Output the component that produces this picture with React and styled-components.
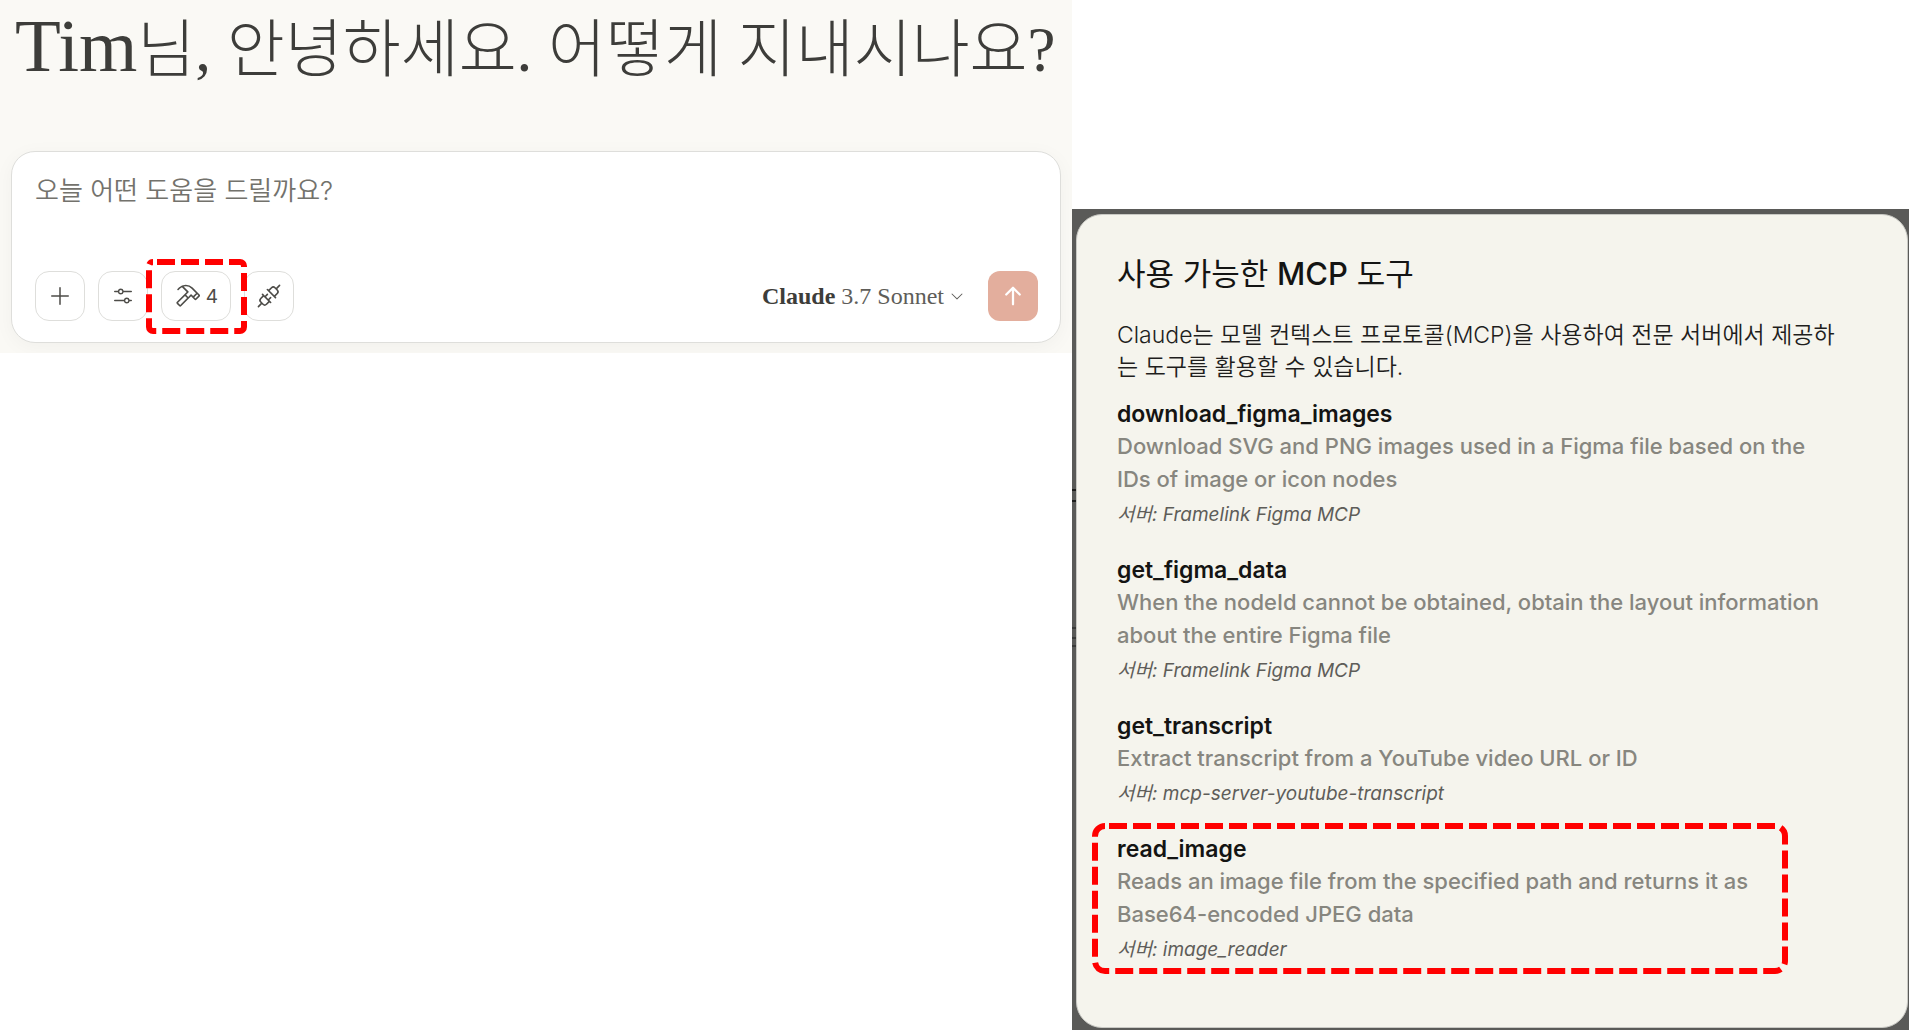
import React, { useState } from 'react';
import styled, { createGlobalStyle } from 'styled-components';
import {
  PiArrowUpBold,
  PiCaretDown,
  PiHammer,
  PiPlugs,
  PiPlus,
  PiSlidersHorizontal,
} from 'react-icons/pi';

const tools = [
  {
    name: 'download_figma_images',
    desc: 'Download SVG and PNG images used in a Figma file based on the IDs of image or icon nodes',
    server: 'Framelink Figma MCP',
  },
  {
    name: 'get_figma_data',
    desc: 'When the nodeId cannot be obtained, obtain the layout information about the entire Figma file',
    server: 'Framelink Figma MCP',
  },
  {
    name: 'get_transcript',
    desc: 'Extract transcript from a YouTube video URL or ID',
    server: 'mcp-server-youtube-transcript',
  },
  {
    name: 'read_image',
    desc: 'Reads an image file from the specified path and returns it as Base64-encoded JPEG data',
    server: 'image_reader',
    marked: true,
  },
];

const GlobalStyle = createGlobalStyle`
  * {
    box-sizing: border-box;
    margin: 0;
    padding: 0;
  }
  body {
    background: #ffffff;
    font-family: Inter, 'Noto Sans CJK KR', sans-serif;
  }
  button,
  textarea {
    font: inherit;
    border: none;
    background: none;
  }
`;

const PageStyle = styled.main`
  display: grid;
  grid-template-columns: 1072fr 837fr;
  align-items: start;
  min-height: 100vh;
`;

const ChatStyle = styled.section`
  padding: 8px 11px 10px;
  background: #faf9f5;
  overflow: hidden;
`;

const Greeting = styled.h1`
  height: 143px;
  padding-left: 4px;
  font-family: 'Liberation Serif', 'Noto Sans CJK KR', serif;
  font-size: 63px;
  font-weight: 300;
  line-height: 76px;
  color: #3d3d3a;
  white-space: nowrap;
  .greeting__name {
    font-size: 75px;
  }
`;

const Composer = styled.form`
  padding: 21px 22px 21px 23px;
  border: 1px solid #dededb;
  border-radius: 24px;
  background: #ffffff;
  box-shadow: 0 4px 20px rgba(0, 0, 0, 0.04);
`;

const Prompt = styled.textarea`
  display: block;
  width: 100%;
  height: 98px;
  font-size: 26px;
  font-weight: 350;
  line-height: 36px;
  resize: none;
  outline: none;
  color: #3d3d3a;
  &::placeholder {
    color: #73726c;
    opacity: 1;
  }
`;

const Toolbar = styled.div`
  display: flex;
  align-items: center;
  gap: 13px;
`;

const ToolButton = styled.button`
  display: flex;
  align-items: center;
  justify-content: center;
  gap: 6px;
  width: ${(props) => (props.$wide ? '70px' : '50px')};
  height: 50px;
  border: 1px solid #dededb;
  border-radius: 14px;
  font-size: 19px;
  color: #4d4c48;
  cursor: pointer;
`;

const MarkedSlot = styled.div`
  position: relative;
`;

const MarkStyle = styled.svg`
  position: absolute;
  inset: ${(props) => props.$inset};
  width: ${(props) => props.$width};
  height: ${(props) => props.$height};
  pointer-events: none;
  rect {
    width: calc(100% - 6px);
    height: calc(100% - 6px);
    fill: none;
    stroke: #ff0000;
    stroke-width: 6px;
    stroke-dasharray: 18 6;
    stroke-dashoffset: -4px;
  }
`;

const ModelButton = styled.button`
  display: flex;
  align-items: center;
  gap: 5px;
  margin-left: auto;
  margin-right: 10px;
  font-family: 'Liberation Serif', serif;
  font-size: 24px;
  color: #5e5d59;
  cursor: pointer;
  strong {
    color: #3d3d3a;
  }
`;

const SendButton = styled.button`
  display: flex;
  align-items: center;
  justify-content: center;
  width: 50px;
  height: 50px;
  border-radius: 12px;
  background: #e3ae9d;
  color: #ffffff;
  cursor: pointer;
`;

const Backdrop = styled.section`
  position: relative;
  display: flex;
  min-height: calc(100vh - 209px);
  margin-top: 209px;
  padding: 5px 1px 2px 4px;
  background: #5a5a58;
  /* edges of the dimmed page behind the dialog */
  &::before {
    content: '';
    position: absolute;
    top: 280px;
    left: 0;
    width: 4px;
    height: 2px;
    background: #1c1c1b;
    box-shadow:
      0 11px #1c1c1b,
      0 138px #3a3a39,
      0 148px #3a3a39,
      0 156px #3a3a39;
  }
`;

const Dialog = styled.div`
  flex: 1;
  padding: 37px 46px 37px 40px;
  border: 1px solid #c9c9c4;
  border-radius: 26px;
  background: #f5f4ed;
`;

const DialogTitle = styled.h2`
  font-size: 31px;
  font-weight: 400;
  line-height: 44px;
  color: #141413;
  span {
    font-weight: 500;
  }
`;

const DialogText = styled.p`
  margin: 23px 0 15px;
  padding-right: 12px;
  font-size: 23px;
  font-weight: 350;
  line-height: 32px;
  color: #1f1e1d;
`;

const ToolList = styled.ul`
  display: grid;
  gap: 20px;
  padding-right: 28px;
  list-style: none;
`;

const ToolItem = styled.li`
  position: relative;
  font-size: 22px;
  line-height: 33px;
  h3 {
    font-size: 23px;
    font-weight: 600;
    line-height: 32px;
    color: #141413;
  }
  .tool__desc {
    font-weight: 500;
    color: #87867f;
  }
  .tool__server {
    display: block;
    font-size: 19px;
    font-style: italic;
    line-height: 38px;
    color: #5e5d59;
  }
`;

function Mark({ inset, width, height, radius }) {
  return (
    <MarkStyle $inset={inset} $width={width} $height={height} aria-hidden="true">
      <rect x="3" y="3" rx={radius} />
    </MarkStyle>
  );
}

export default function App() {
  const [message, setMessage] = useState('');
  const handleSubmit = (e) => {
    e.preventDefault();
    setMessage('');
  };

  return (
    <>
      <GlobalStyle />
      <PageStyle>
        <ChatStyle>
          <Greeting>
            <span className="greeting__name">Tim</span>님, 안녕하세요. 어떻게
            지내시나요?
          </Greeting>
          <Composer onSubmit={handleSubmit}>
            <Prompt
              aria-label="메시지"
              placeholder="오늘 어떤 도움을 드릴까요?"
              value={message}
              onChange={(e) => setMessage(e.target.value)}
            />
            <Toolbar>
              <ToolButton type="button" aria-label="추가">
                <PiPlus size={24} />
              </ToolButton>
              <ToolButton type="button" aria-label="설정">
                <PiSlidersHorizontal size={24} />
              </ToolButton>
              <MarkedSlot>
                <ToolButton type="button" $wide>
                  <PiHammer size={26} />4
                </ToolButton>
                <Mark
                  inset="-12px auto auto -15px"
                  width="101px"
                  height="75px"
                  radius={4}
                />
              </MarkedSlot>
              <ToolButton type="button" aria-label="연결">
                <PiPlugs size={26} />
              </ToolButton>
              <ModelButton type="button">
                <span>
                  <strong>Claude</strong> 3.7 Sonnet
                </span>
                <PiCaretDown size={16} />
              </ModelButton>
              <SendButton type="submit" aria-label="보내기">
                <PiArrowUpBold size={24} />
              </SendButton>
            </Toolbar>
          </Composer>
        </ChatStyle>
        <Backdrop>
          <Dialog role="dialog" aria-labelledby="tools-title">
            <DialogTitle id="tools-title">
              사용 가능한 <span>MCP</span> 도구
            </DialogTitle>
            <DialogText>
              Claude는 모델 컨텍스트 프로토콜(MCP)을 사용하여 전문 서버에서
              제공하는 도구를 활용할 수 있습니다.
            </DialogText>
            <ToolList>
              {tools.map((tool) => (
                <ToolItem key={tool.name}>
                  <h3>{tool.name}</h3>
                  <p className="tool__desc">{tool.desc}</p>
                  <em className="tool__server">서버: {tool.server}</em>
                  {tool.marked && (
                    <Mark
                      inset="-10px auto auto -25px"
                      width="696px"
                      height="151px"
                      radius={10}
                    />
                  )}
                </ToolItem>
              ))}
            </ToolList>
          </Dialog>
        </Backdrop>
      </PageStyle>
    </>
  );
}
